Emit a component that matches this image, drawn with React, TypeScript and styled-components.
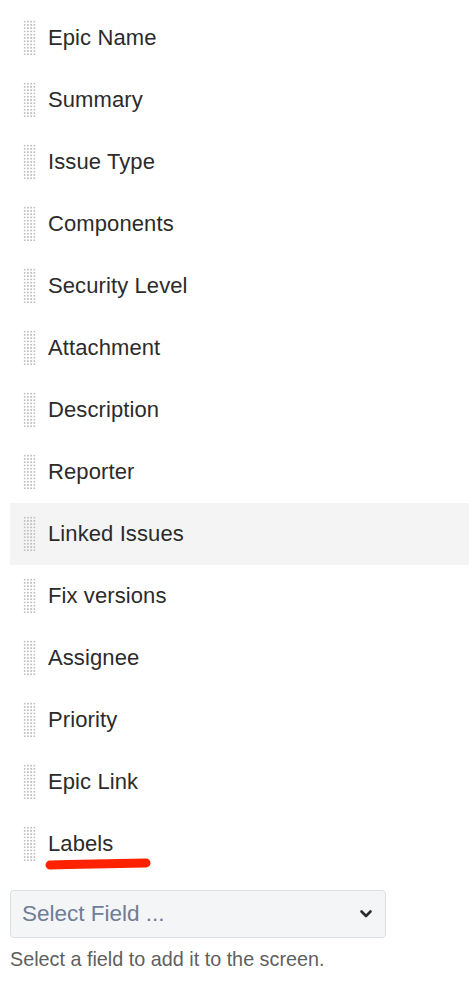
import React from 'react';
import styled, { createGlobalStyle } from 'styled-components';

const GlobalStyle = createGlobalStyle`
  body {
    margin: 0;
    background: #fff;
    font-family: "Liberation Sans", Arial, sans-serif;
  }
`;

const Page = styled.div`
  padding: 7px 0 0 10px;
`;

const FieldList = styled.div`
  display: flex;
  flex-direction: column;
`;

const FieldRow = styled.div<{ highlighted?: boolean }>`
  position: relative;
  display: flex;
  align-items: center;
  gap: 12px;
  height: 62px;
  padding-left: 13px;
  background: ${props => (props.highlighted ? '#f4f4f4' : 'transparent')};
`;

const Grip = styled.div`
  width: 13px;
  height: 36px;
  flex-shrink: 0;
  background-image: radial-gradient(circle at center, #bebebe 0.9px, transparent 1.2px);
  background-size: 3.25px 3.27px;
`;

const FieldName = styled.span`
  font-size: 22px;
  color: #2b2b2b;
  letter-spacing: 0.1px;
`;

const Underline = styled.svg`
  position: absolute;
  left: 36px;
  top: 36px;
  width: 120px;
  height: 20px;
  overflow: visible;
`;

const SelectBox = styled.div`
  display: flex;
  align-items: center;
  justify-content: space-between;
  box-sizing: border-box;
  width: 376px;
  height: 48px;
  margin-top: 15px;
  padding: 0 12px 0 11px;
  background: #f4f5f7;
  border: 1px solid #dcdfe4;
  border-radius: 4px;
`;

const Placeholder = styled.span`
  font-size: 22.5px;
  color: #6f7d95;
`;

const HelperText = styled.div`
  margin-top: 10px;
  font-size: 19.8px;
  color: #5f5f5f;
`;

const fields = [
  'Epic Name',
  'Summary',
  'Issue Type',
  'Components',
  'Security Level',
  'Attachment',
  'Description',
  'Reporter',
  'Linked Issues',
  'Fix versions',
  'Assignee',
  'Priority',
  'Epic Link',
  'Labels',
];

const Chevron = () => (
  <svg width="14" height="14" viewBox="0 0 14 14">
    <path d="M2.5 4.5 L7 9 L11.5 4.5" fill="none" stroke="#2b2b2b" strokeWidth="2.6" strokeLinecap="round" strokeLinejoin="round" />
  </svg>
);

const App: React.FC = () => {
  return (
    <Page>
      <GlobalStyle />
      <FieldList>
        {fields.map(name => (
          <FieldRow key={name} highlighted={name === 'Linked Issues'}>
            <Grip />
            <FieldName>{name}</FieldName>
            {name === 'Labels' && (
              <Underline viewBox="0 0 120 20">
                <path d="M4 16 C 40 15, 80 14.5, 100 14" fill="none" stroke="#ff2200" strokeWidth="9" strokeLinecap="round" />
              </Underline>
            )}
          </FieldRow>
        ))}
      </FieldList>
      <SelectBox>
        <Placeholder>Select Field ...</Placeholder>
        <Chevron />
      </SelectBox>
      <HelperText>Select a field to add it to the screen.</HelperText>
    </Page>
  );
};

export default App;
